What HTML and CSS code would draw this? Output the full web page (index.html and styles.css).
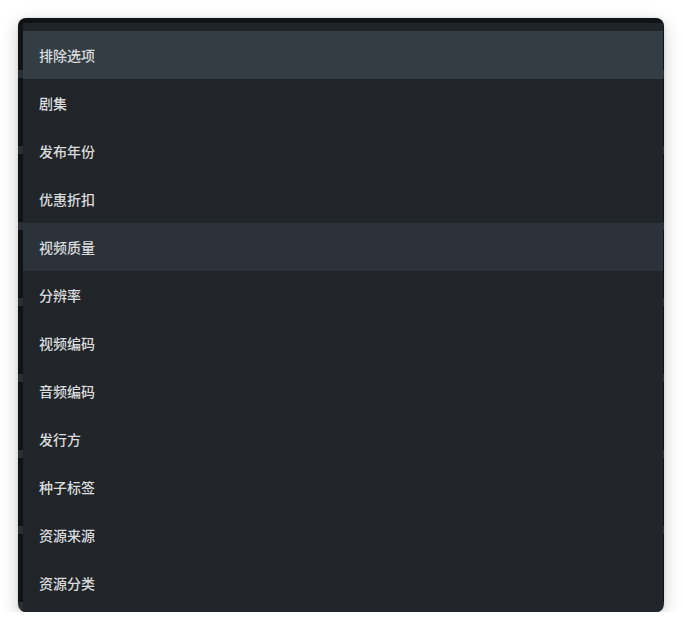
FILE: index.html
```html
<!DOCTYPE html>
<html lang="zh-CN">
<head>
<meta charset="utf-8">
<title>筛选菜单</title>
<link rel="stylesheet" href="styles.css">
</head>
<body>
<div class="frame">
  <ul class="menu">
    <li class="item hover">排除选项</li>
    <li class="item">剧集</li>
    <li class="item">发布年份</li>
    <li class="item">优惠折扣</li>
    <li class="item active">视频质量</li>
    <li class="item">分辨率</li>
    <li class="item">视频编码</li>
    <li class="item">音频编码</li>
    <li class="item">发行方</li>
    <li class="item">种子标签</li>
    <li class="item">资源来源</li>
    <li class="item">资源分类</li>
  </ul>
</div>
</body>
</html>
```

FILE: styles.css
```css
html, body {
  margin: 0;
  padding: 0;
  background: #ffffff;
}
body {
  padding: 18px 18px 0 18px;
  font-family: "Noto Sans CJK SC", "Noto Sans", sans-serif;
}
.frame {
  width: 646px;
  height: 594px;
  box-sizing: border-box;
  padding: 5px 1px 0 5px;
  border-radius: 8px;
  overflow: hidden;
  background-color: #0f1315;
  background-image: repeating-linear-gradient(
    to bottom,
    transparent 0px,
    transparent 52px,
    #2a2f33 52px,
    #2a2f33 60px,
    transparent 60px,
    transparent 76px
  );
  box-shadow: 0 5px 18px rgba(0, 0, 0, 0.2), 0 0 3px rgba(0, 0, 0, 0.12);
}
.menu {
  list-style: none;
  margin: 0;
  padding: 8px 0 5px 0;
  height: 100%;
  box-sizing: border-box;
  background: #212529;
  display: flex;
  flex-direction: column;
}
.item {
  height: 48px;
  flex: 0 0 48px;
  display: flex;
  align-items: center;
  padding-left: 16px;
  font-size: 14px;
  font-weight: 500;
  color: #d9dbdd;
}
.item.hover {
  background: #333d43;
}
.item.active {
  background: #2b3239;
}
```
